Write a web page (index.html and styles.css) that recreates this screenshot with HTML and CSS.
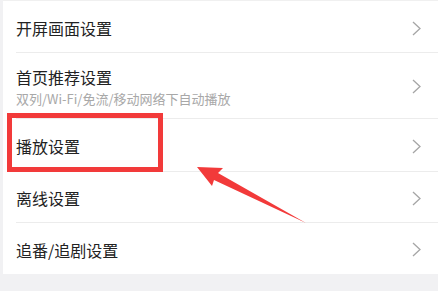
FILE: index.html
```html
<!DOCTYPE html>
<html lang="zh">
<head>
<meta charset="utf-8">
<link rel="stylesheet" href="styles.css">
</head>
<body>
<div class="page">
  <div class="card">
    <div class="row r1"><div class="text"><div class="title">开屏画面设置</div></div><svg class="chev" width="9" height="15" viewBox="0 0 9 15"><polyline points="1,1 8,7.5 1,14" fill="none" stroke="#a6a6a6" stroke-width="1.3"/></svg></div>
    <div class="row r2"><div class="text"><div class="title">首页推荐设置</div><div class="sub">双列/Wi-Fi/免流/移动网络下自动播放</div></div><svg class="chev" width="9" height="15" viewBox="0 0 9 15"><polyline points="1,1 8,7.5 1,14" fill="none" stroke="#a6a6a6" stroke-width="1.3"/></svg></div>
    <div class="row r3"><div class="text"><div class="title">播放设置</div></div><svg class="chev" width="9" height="15" viewBox="0 0 9 15"><polyline points="1,1 8,7.5 1,14" fill="none" stroke="#a6a6a6" stroke-width="1.3"/></svg></div>
    <div class="row r4"><div class="text"><div class="title">离线设置</div></div><svg class="chev" width="9" height="15" viewBox="0 0 9 15"><polyline points="1,1 8,7.5 1,14" fill="none" stroke="#a6a6a6" stroke-width="1.3"/></svg></div>
    <div class="row r5 last"><div class="text"><div class="title">追番/追剧设置</div></div><svg class="chev" width="9" height="15" viewBox="0 0 9 15"><polyline points="1,1 8,7.5 1,14" fill="none" stroke="#a6a6a6" stroke-width="1.3"/></svg></div>
  </div>
  <div class="highlight"></div>
  <svg class="arrow" width="438" height="291" viewBox="0 0 438 291"><polygon points="197,167 223,168 218,173 306,223 214,180 212,186" fill="#f23a3a"/></svg>
</div>
</body>
</html>
```
FILE: styles.css
```css
html, body { margin: 0; padding: 0; }
body {
  background: #f1f1f3;
  font-family: "Noto Sans CJK SC", "Noto Sans", sans-serif;
  width: 438px;
  height: 291px;
  overflow: hidden;
}
.page { position: relative; width: 438px; height: 291px; }
.card {
  margin-left: 3px;
  padding-top: 1px;
  background: #ffffff;
  border-top: 1px solid #f0f0f0;
}
.row {
  display: flex;
  align-items: center;
  justify-content: space-between;
  margin-left: 13px;
  padding-right: 17px;
  border-bottom: 1px solid #ececec;
  box-sizing: border-box;
}
.row.last { border-bottom: none; }
.r1 { height: 51px; padding-top: 2px; }
.r2 { height: 66px; padding-top: 1px; }
.r3 { height: 53px; padding-top: 2px; }
.r4 { height: 51px; padding-top: 2px; }
.r5 { height: 51px; padding-top: 2px; }
.title {
  font-size: 16px;
  line-height: 24px;
  color: #222222;
}
.sub {
  font-size: 13px;
  line-height: 19px;
  color: #a8a8a8;
}
.chev { display: block; flex: none; }
.highlight {
  position: absolute;
  left: 7px;
  top: 113px;
  width: 156px;
  height: 59px;
  box-sizing: border-box;
  border: 5px solid #f23a3a;
}
.arrow { position: absolute; left: 0; top: 0; }
```
